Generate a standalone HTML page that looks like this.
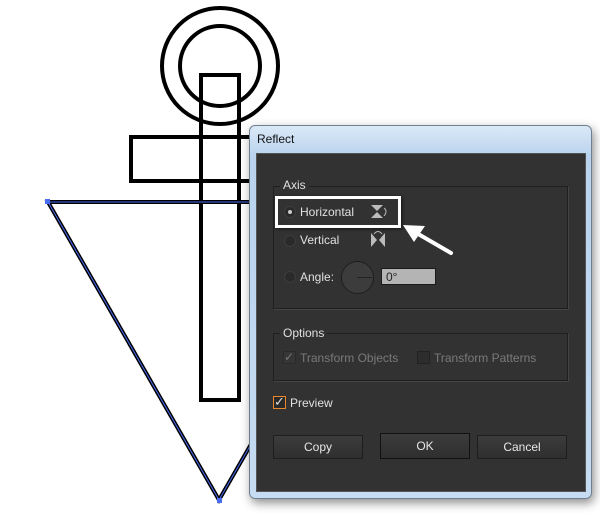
<!DOCTYPE html>
<html><head><style>
body{margin:0;width:600px;height:527px;background:#fff;position:relative;overflow:hidden;font-family:"Liberation Sans",sans-serif;}
.a{position:absolute}
.t{position:absolute;color:#e0e0e0;font-size:12px;white-space:nowrap}
.btn{position:absolute;height:22px;background:linear-gradient(#3c3c3c,#2f2f2f);border:1px solid #1e1e1e;color:#e6e6e6;font-size:12px;text-align:center;line-height:22px}
.rad{position:absolute;width:10px;height:10px;border-radius:50%;background:#2a2a2a;border:1px solid #3d3d3d}
</style></head><body>
<svg class="a" style="left:0;top:0" width="600" height="527">
<circle cx="220" cy="66" r="58" fill="none" stroke="#000" stroke-width="4"/>
<circle cx="220" cy="66" r="40" fill="none" stroke="#000" stroke-width="4"/>
<rect x="201" y="75" width="38" height="325" fill="none" stroke="#000" stroke-width="4"/>
<rect x="131" y="137" width="140" height="44" fill="none" stroke="#000" stroke-width="4"/>
<polygon points="48,202 390,202 219,500" fill="none" stroke="#000" stroke-width="4"/>
<polygon points="48,202 390,202 219,500" fill="none" stroke="#4a6cf0" stroke-width="1"/>
<rect x="45" y="199" width="5" height="5" fill="#4a6cf0"/>
<rect x="217" y="498" width="5" height="5" fill="#4a6cf0"/>
</svg>
<div class="a" style="left:249px;top:125px;width:341px;height:372px;border-radius:6px;background:linear-gradient(#dbe9f7,#b9d3ee 30px,#c6dcf2);border:1px solid #6f7f90;box-shadow:2px 4px 10px rgba(0,0,0,.45)"></div>
<div class="t" style="left:257px;top:132px;color:#111">Reflect</div>
<div class="a" style="left:256px;top:153px;width:328px;height:337px;background:#323232;border:1px solid #555"></div>
<div class="a" style="left:273px;top:186px;width:293px;height:121px;border:1px solid #1f1f1f;box-shadow:1px 1px 0 #444"></div>
<div class="t" style="left:280px;top:178px;background:#323232;padding:0 3px">Axis</div>
<div class="rad" style="left:284px;top:206px"></div><div class="a" style="left:288px;top:210px;width:4px;height:4px;border-radius:50%;background:#ccc"></div>
<div class="t" style="left:300px;top:205px">Horizontal</div>
<div class="rad" style="left:284px;top:235px"></div>
<div class="t" style="left:300px;top:233px">Vertical</div>
<div class="rad" style="left:284px;top:271px"></div>
<div class="t" style="left:300px;top:270px">Angle:</div>
<div class="a" style="left:341px;top:261px;width:31px;height:31px;border-radius:50%;background:#3c3c3c;border:1px solid #1e1e1e"></div>
<div class="a" style="left:357px;top:277px;width:15px;height:1px;background:#222"></div>
<div class="a" style="left:381px;top:268px;width:55px;height:17px;background:#b4b4b4;border:1px solid #1a1a1a;color:#222;font-size:12px;line-height:17px;padding-left:4px;box-sizing:border-box">0°</div>
<svg class="a" style="left:368px;top:202px" width="20" height="50">
<path d="M3,3 L15,3 L9,9 Z M3,16 L15,16 L9,10 Z" fill="#bbb"/><path d="M16,6 q4,3 0,8" fill="none" stroke="#bbb"/>
<path d="M3,31 L3,45 L9,38 Z M17,31 L17,45 L11,38 Z" fill="#bbb"/><path d="M6,32 q4,-5 8,0" fill="none" stroke="#bbb"/>
</svg>
<div class="a" style="left:275px;top:196px;width:120px;height:26px;border:3px solid #fff;box-shadow:1px 1px 3px rgba(0,0,0,.6)"></div>
<svg class="a" style="left:395px;top:215px" width="70" height="50">
<path d="M56,38 L18,16" stroke="#fff" stroke-width="4" stroke-linecap="round"/>
<path d="M8,10 L30,11 L19,27 Z" fill="#fff"/>
</svg>
<div class="a" style="left:273px;top:333px;width:293px;height:46px;border:1px solid #1f1f1f;box-shadow:1px 1px 0 #444"></div>
<div class="t" style="left:280px;top:326px;background:#323232;padding:0 3px">Options</div>
<div class="a" style="left:283px;top:351px;width:11px;height:11px;background:#363636;border:1px solid #2a2a2a;color:#777;font-size:12px;line-height:10px">✓</div>
<div class="t" style="left:300px;top:351px;color:#7a7a7a">Transform Objects</div>
<div class="a" style="left:417px;top:351px;width:11px;height:11px;background:#2d2d2d;border:1px solid #222"></div>
<div class="t" style="left:434px;top:351px;color:#7a7a7a">Transform Patterns</div>
<div class="a" style="left:273px;top:396px;width:11px;height:11px;background:#2a2a2a;border:1px solid #e8882a;color:#ddd;font-size:13px;line-height:10px">✓</div>
<div class="t" style="left:290px;top:396px">Preview</div>
<div class="btn" style="left:273px;top:435px;width:88px">Copy</div>
<div class="btn" style="left:380px;top:433px;width:88px;height:24px;line-height:24px;border:1px solid #111">OK</div>
<div class="btn" style="left:477px;top:435px;width:88px">Cancel</div>
</body></html>
